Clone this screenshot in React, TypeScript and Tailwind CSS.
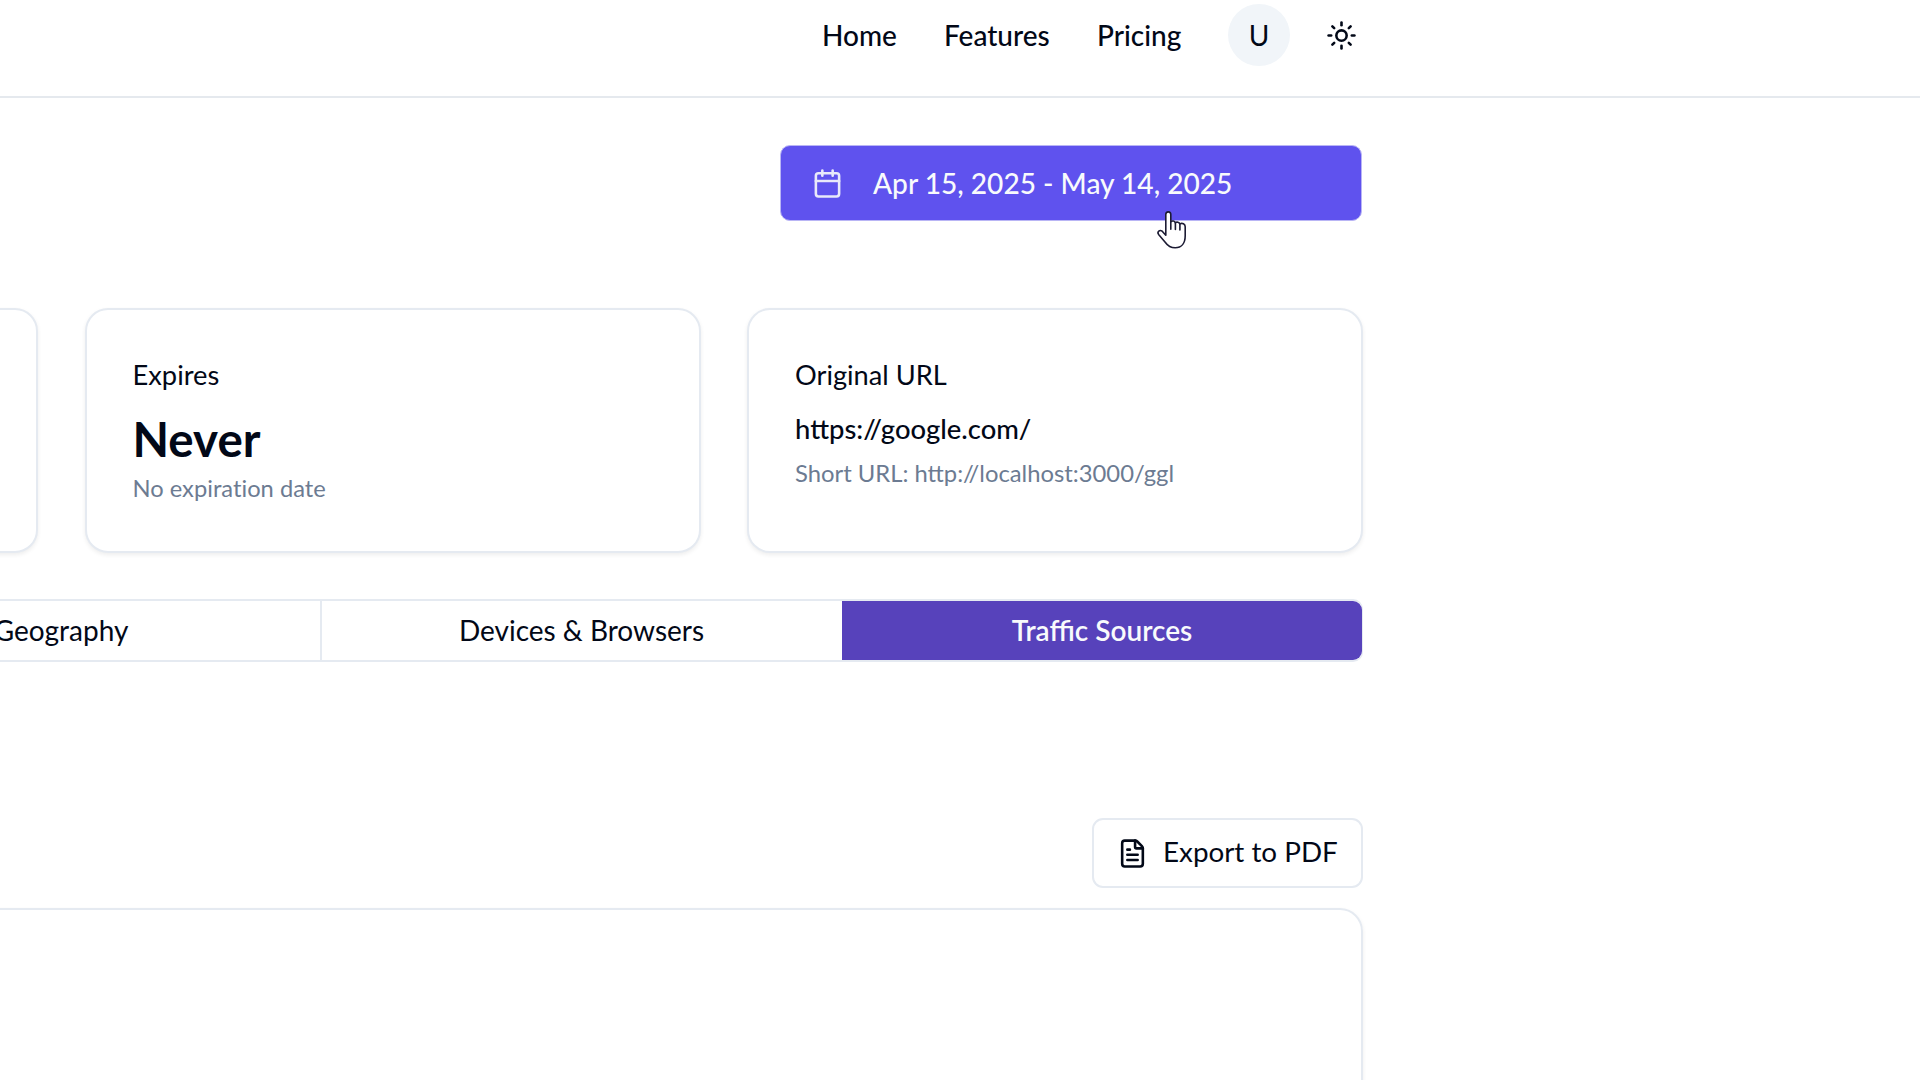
import React from 'react';
import { Calendar, FileText, Sun } from 'lucide-react';

function Card({ children }: { children?: React.ReactNode }) {
  return (
    <div className="h-[245px] w-[616px] shrink-0 rounded-[23px] border-2 border-[#e5eaf1] bg-white px-[46px] pt-[45px] shadow-[0_2px_4px_0_rgba(0,0,0,0.07)]">
      {children}
    </div>
  );
}

function HandCursor() {
  return (
    <svg
      className="pointer-events-none absolute left-[1156px] top-[210px]"
      width="31"
      height="41"
      viewBox="0 0 31 41"
      fill="#ffffff"
      stroke="#1c1b33"
      strokeWidth="1.6"
      strokeLinejoin="round"
      strokeLinecap="round"
    >
      <path d="M9.8 25.2V4.6c0-3.6 5-3.6 5 0v7.2c1.2-1.3 3.9-1 4.5.9 1.5-1.1 4-.6 4.5 1.2 2.6-1.3 5.4.1 5.4 2.9v9c0 7.4-3.6 12-10 12-4.6 0-7.4-1.9-10-5.6L2.6 24.4c-1.9-2.9 1.2-5 3.6-3.2z" />
      <path d="M14.8 11.8v7.4M19.4 12.7v6.8M23.9 13.9v6" fill="none" />
    </svg>
  );
}

export default function App() {
  return (
    <div className="relative h-[1080px] w-full overflow-hidden bg-white font-['Lato',sans-serif] text-[28px] leading-[40px] text-[#020817]">
      <header className="h-[98px] border-b-2 border-[#e5e9ee]">
        <div className="flex h-[70px] w-[1357px] items-center justify-end font-medium">
          <nav className="flex">
            <a className="w-[122px] pl-px">Home</a>
            <a className="w-[153px] pl-px">Features</a>
            <a className="w-[132px] pl-px">Pricing</a>
          </nav>
          <div className="flex size-[62px] items-center justify-center rounded-full bg-slate-100 font-normal">U</div>
          <Sun className="ml-[36px] size-[31px]" />
        </div>
      </header>

      <main className="flex w-[1363px] flex-col items-end">
        <button className="mr-[1px] mt-[47px] flex h-[76px] w-[582px] items-center rounded-[10px] border border-[#b9b5f5] bg-[#5f52ee] pl-[31px] text-slate-50">
          <Calendar className="size-[31px] opacity-90" />
          <span className="ml-[30px] text-[28.1px] font-medium">Apr 15, 2025 - May 14, 2025</span>
        </button>

        <section className="mt-[87px] flex justify-end gap-[46.5px]">
          <Card />
          <Card>
            <div className="text-[27.3px]">Expires</div>
            <div className="mt-[20px] text-[47.5px] font-bold leading-[47px]">Never</div>
            <div className="mt-[10px] text-[23.7px] leading-[32px] tracking-[0.01px] text-[#6c7b92]">No expiration date</div>
          </Card>
          <Card>
            <div className="text-[27.2px]">Original URL</div>
            <div className="mt-[14px] text-[27.4px] font-medium">https://google.com/</div>
            <div className="mt-[8px] text-[23.8px] leading-[32px] text-[#6c7b92]">Short URL: http://localhost:3000/ggl</div>
          </Card>
        </section>

        <div className="mt-[46px] flex h-[63px] justify-end rounded-[10px] border-2 border-r border-[#e5eaf1]">
          <button className="w-[520px] shrink-0 border-r-2 border-[#e5eaf1] pb-px">Geography</button>
          <button className="w-[520px] shrink-0 pb-px pr-px">Devices &amp; Browsers</button>
          <button className="w-[520px] shrink-0 rounded-r-[9px] bg-[#5742bb] pb-px font-semibold text-slate-50">
            Traffic Sources
          </button>
        </div>

        <button className="mt-[156px] flex h-[70px] w-[271px] items-center rounded-[11px] border-2 border-[#e5eaf1] pl-[23px]">
          <FileText className="size-[31px]" />
          <span className="ml-[15px] pb-[3px] text-[27.8px]">Export to PDF</span>
        </button>

        <div className="mt-[20px] h-[400px] w-[1900px] rounded-[23px] border-2 border-[#e5eaf1] shadow-[0_2px_4px_0_rgba(0,0,0,0.07)]" />
      </main>

      <HandCursor />
    </div>
  );
}
